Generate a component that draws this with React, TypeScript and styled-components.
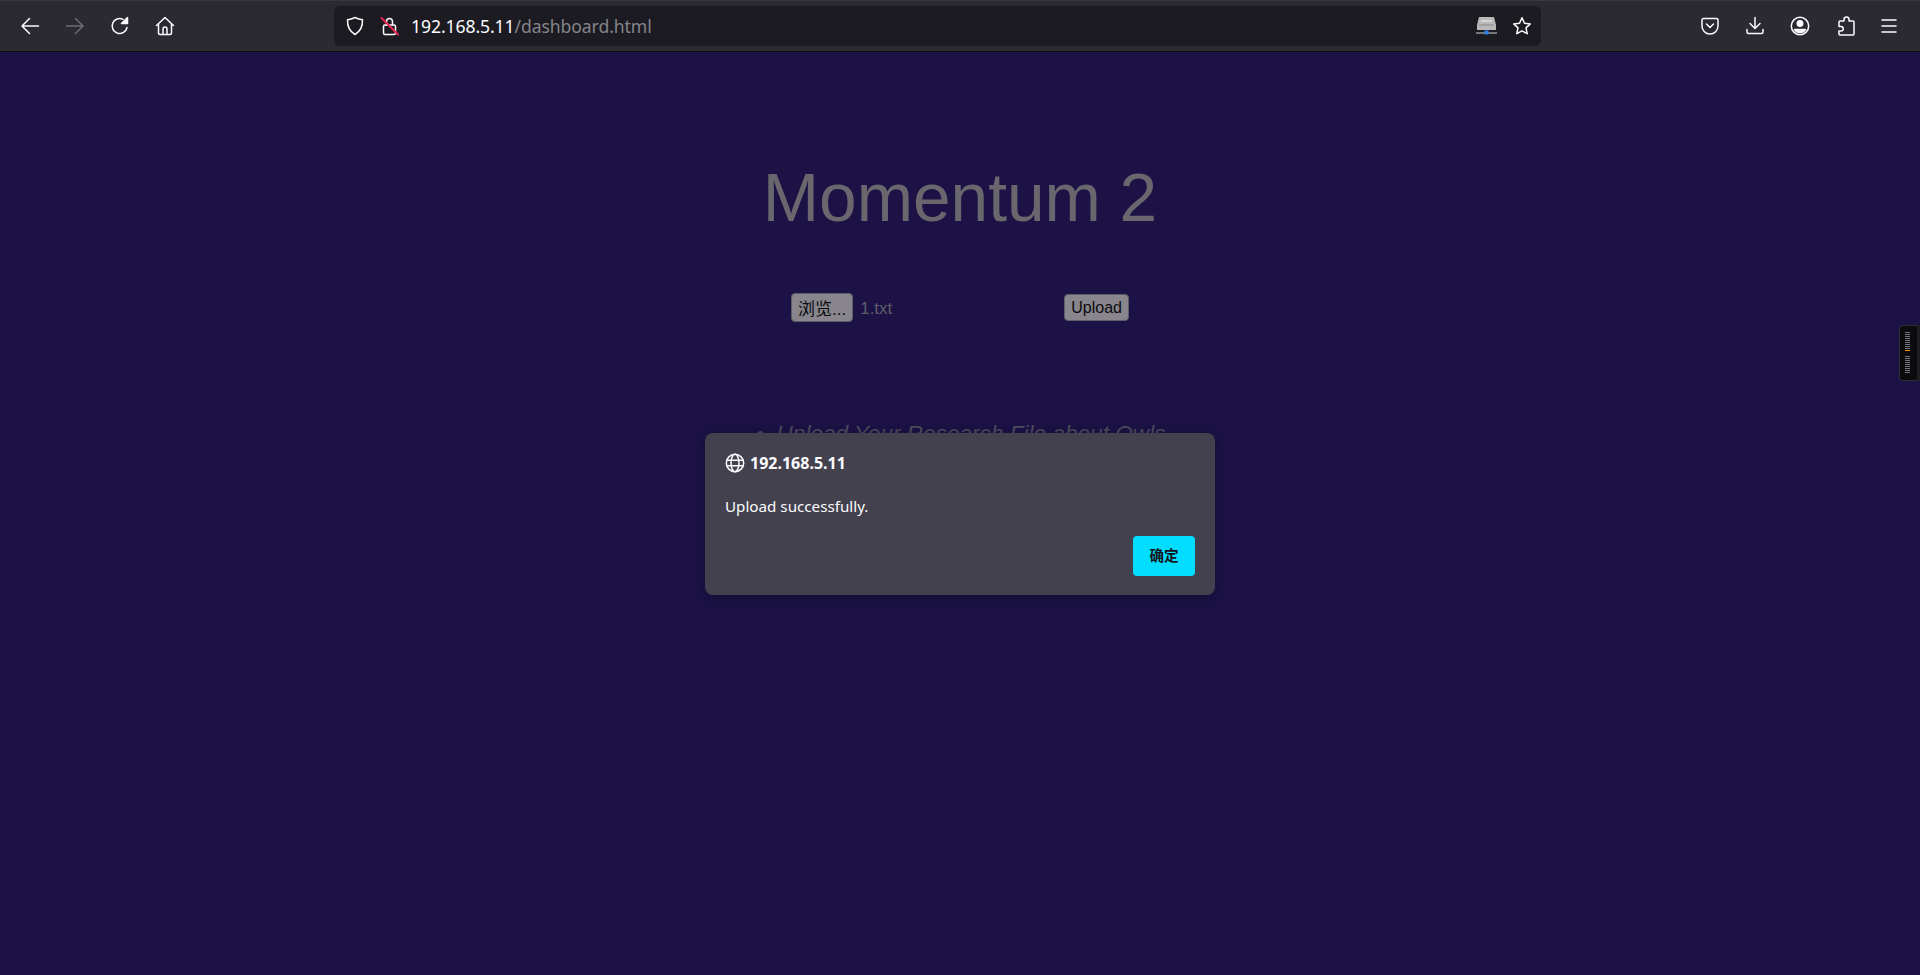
import React from 'react'
import styled, { createGlobalStyle } from 'styled-components'

const GlobalStyle = createGlobalStyle`
  html, body {
    margin: 0;
    padding: 0;
    height: 100%;
    background: #1c1246;
    overflow: hidden;
  }
`

const Window = styled.div`
  position: relative;
  display: flex;
  flex-direction: column;
  width: 1920px;
  height: 975px;
  background: #1c1246;
`

const Toolbar = styled.header`
  display: flex;
  align-items: center;
  flex: none;
  box-sizing: border-box;
  height: 52px;
  padding: 0 21px 0 20px;
  background: #2b2a33;
  border-top: 1px solid #38373f;
  border-bottom: 1px solid #0c0c0f;
`

const NavGroup = styled.nav`
  display: flex;
  align-items: center;
  gap: 25px;
  width: 314px;
`

const UrlBar = styled.div`
  display: flex;
  align-items: center;
  box-sizing: border-box;
  width: 1207px;
  height: 40px;
  padding: 0 9px 0 11px;
  background: #1c1b22;
  border-radius: 6px;
`

const UrlIcons = styled.div`
  display: flex;
  align-items: center;
  gap: 15px;
  margin-right: 11px;
`

const UrlText = styled.div`
  flex: 1;
  font: 17.6px 'Noto Sans', 'Open Sans', sans-serif;
  letter-spacing: -0.1px;
  color: #fbfbfe;
  white-space: nowrap;
`

const UrlPath = styled.span`
  color: #85848a;
`

const UrlActions = styled.div`
  display: flex;
  align-items: center;
  gap: 15px;
`

const ToolGroup = styled.div`
  display: flex;
  align-items: center;
  gap: 26.6px;
  margin-left: 160px;
`

const Icon = styled.svg<{ $dim?: boolean }>`
  display: block;
  flex: none;
  fill: none;
  stroke: ${(props) => (props.$dim ? '#6c6b72' : '#fbfbfe')};
  stroke-width: 1.5;
  stroke-linecap: round;
  stroke-linejoin: round;
`

const Page = styled.main`
  display: flex;
  flex-direction: column;
  align-items: center;
  flex: 1;
  font-family: 'Liberation Sans', Arial, sans-serif;
  color: #69676d;
`

const Title = styled.h1`
  margin: 107px 0 0;
  font-size: 67.6px;
  font-weight: 400;
  line-height: 78px;
`

const UploadForm = styled.form`
  display: flex;
  align-items: center;
  box-sizing: border-box;
  width: 338px;
  height: 29px;
  margin-top: 56px;
`

const FormButton = styled.span<{ $tall?: boolean }>`
  display: flex;
  align-items: center;
  justify-content: center;
  box-sizing: border-box;
  height: ${(props) => (props.$tall ? '29px' : '27px')};
  padding: 0 ${(props) => (props.$tall ? '6px' : '6px')};
  background: #88868c;
  border: 1px solid #5f5d68;
  border-radius: 4px;
  color: #0b0a0f;
  font: ${(props) => (props.$tall ? '17px' : '16px')} 'Liberation Sans', 'Noto Sans CJK SC', sans-serif;
`

const FileName = styled.span`
  flex: 1;
  margin-left: 7px;
  padding-top: 2px;
  font-size: 17px;
  color: #5f5d68;
`

const Notes = styled.ul`
  margin: 98px 0 0;
  padding: 0 0 0 22px;
  font-size: 22.6px;
  font-style: italic;
  line-height: 28px;
  color: #514e5f;
`

const Overlay = styled.div`
  position: absolute;
  inset: 52px 0 0 0;
  display: flex;
  justify-content: center;
  align-items: flex-start;
  padding-top: 381px;
`

const Dialog = styled.div`
  display: flex;
  flex-direction: column;
  box-sizing: border-box;
  width: 510px;
  height: 162px;
  padding: 19px 20px 19px;
  background: #44414f;
  border-radius: 8px;
  box-shadow: 0 2px 14px rgba(10, 6, 30, 0.45);
  font-family: 'Noto Sans', 'Open Sans', sans-serif;
  color: #fbfbfe;
`

const DialogHeading = styled.div`
  display: flex;
  align-items: center;
  gap: 5px;
  height: 22px;
  font-size: 16px;
  font-weight: 700;
`

const DialogMessage = styled.div`
  margin-top: 21px;
  font-size: 15.2px;
  line-height: 22px;
`

const DialogFooter = styled.div`
  display: flex;
  justify-content: flex-end;
  margin-top: auto;
`

const ConfirmButton = styled.button`
  width: 62px;
  height: 40px;
  padding: 0 0 3px;
  border: 0;
  border-radius: 4px;
  background: #00ddff;
  color: #15141a;
  font: 700 14.6px 'Noto Sans CJK SC', sans-serif;
`

const SideWidget = styled.aside`
  position: absolute;
  top: 325px;
  right: 0;
  display: flex;
  flex-direction: column;
  align-items: center;
  box-sizing: border-box;
  width: 21px;
  height: 56px;
  padding: 6px 3px 0 0;
  background: #0b0b0d;
  border: 1px solid #2e2d33;
  border-right: 3px solid #1e1e22;
  border-radius: 4px 0 0 4px;
`

const Tick = styled.i<{ $on?: boolean; $gap?: boolean }>`
  display: block;
  flex: none;
  width: 5px;
  height: 1px;
  margin-bottom: 1px;
  margin-top: ${(props) => (props.$gap ? '4px' : '0')};
  background: ${(props) => (props.$on ? '#e8900c' : '#77767b')};
`

const BackIcon = () => (
  <Icon width="20" height="20" viewBox="0 0 20 20">
    <path d="M18.500 10H2M9.500 2.500 2 10l7.500 7.500" />
  </Icon>
)

const ForwardIcon = () => (
  <Icon $dim width="20" height="20" viewBox="0 0 20 20">
    <path d="M1.500 10H18M10.500 2.500 18 10l-7.500 7.500" />
  </Icon>
)

const ReloadIcon = () => (
  <Icon width="20" height="20" viewBox="0 0 20 20">
    <path d="M17 11.500A7.500 7.500 0 1 1 13 3.300" />
    <path d="M17.500 1.500v6h-6z" fill="#fbfbfe" />
  </Icon>
)

const HomeIcon = () => (
  <Icon width="20" height="20" viewBox="0 0 20 20">
    <path d="M1.500 9.500 10 1.500l8.500 8M3.500 8v9a1.500 1.500 0 0 0 1.500 1.500h10a1.500 1.500 0 0 0 1.500-1.500V8" />
    <path d="M8 18.500V13a2 2 0 0 1 4 0v5.500" />
  </Icon>
)

const ShieldIcon = () => (
  <Icon width="20" height="20" viewBox="0 0 20 20">
    <path d="M10 1.500c2.500 1.300 5 2 7.500 2.200.3 6.800-2 11.500-7.500 14.800C4.500 15.200 2.200 10.500 2.500 3.700 5 3.500 7.500 2.800 10 1.500z" />
  </Icon>
)

const BrokenLockIcon = () => (
  <Icon width="20" height="20" viewBox="0 0 20 20">
    <rect x="3.500" y="9" width="12" height="9.500" rx="1.500" />
    <path d="M6.500 9V5.500a3 3 0 0 1 6 0V9" />
    <path d="M1.500 2 18 18.500" stroke="#e22850" strokeWidth="2" />
  </Icon>
)

const StorageIcon = () => (
  <svg width="21" height="20" viewBox="0 0 21 20">
    <path d="M3 1h15l2 8v5H1V9z" fill="#b9b9b9" />
    <path d="M3 9h15" stroke="#8a8a8a" />
    <path d="M5 4h11v2H5z" fill="#d4d4d4" />
    <rect x="0" y="16" width="21" height="2" fill="#77767b" />
    <rect x="8.500" y="14.500" width="4" height="4" fill="#2f7fe8" />
  </svg>
)

const StarIcon = () => (
  <Icon width="20" height="20" viewBox="0 0 20 20">
    <path d="M10 1.800l2.500 5.400 5.800.7-4.300 4 1.200 5.800L10 14.800l-5.200 2.900L6 11.900l-4.300-4 5.800-.7z" />
  </Icon>
)

const PocketIcon = () => (
  <Icon width="18" height="20" viewBox="0 0 18 20">
    <path d="M2.500 2.500h13A1.500 1.500 0 0 1 17 4v6a8 8 0 0 1-16 0V4a1.500 1.500 0 0 1 1.500-1.500z" />
    <path d="M5.500 8 9 11.500 12.500 8" />
  </Icon>
)

const DownloadIcon = () => (
  <Icon width="18" height="20" viewBox="0 0 18 20">
    <path d="M9 1.500V12.500M4 7.500l5 5 5-5M1 13.500v2.500a1.500 1.500 0 0 0 1.500 1.500h13A1.500 1.500 0 0 0 17 16v-2.500" />
  </Icon>
)

const AccountIcon = () => (
  <Icon width="20" height="20" viewBox="0 0 20 20">
    <circle cx="10" cy="10" r="8.700" />
    <circle cx="10" cy="7.500" r="2.700" fill="#fbfbfe" />
    <path d="M4.500 13.500h11c-1 2-3 3-5.500 3s-4.500-1-5.500-3z" fill="#fbfbfe" />
  </Icon>
)

const PuzzleIcon = () => (
  <Icon width="18" height="20" viewBox="0 0 18 20">
    <path d="M7 5V3.500a2.500 2.500 0 0 1 5 0V5h4a1 1 0 0 1 1 1v12a1 1 0 0 1-1 1H3a1 1 0 0 1-1-1v-3h2a2.200 2.200 0 0 0 0-4.500H2V6a1 1 0 0 1 1-1z" />
  </Icon>
)

const MenuIcon = () => (
  <Icon width="16" height="20" viewBox="0 0 16 20">
    <path d="M1 4h14M1 10h14M1 16h14" />
  </Icon>
)

const GlobeIcon = () => (
  <Icon width="20" height="20" viewBox="0 0 20 20">
    <circle cx="10" cy="10" r="8.700" />
    <ellipse cx="10" cy="10" rx="4" ry="8.700" />
    <path d="M1.800 7.200h16.400M1.800 12.800h16.400" />
  </Icon>
)

const sliderTicks = Array.from({ length: 19 }, (_, i) => i)

const App: React.FC = () => {
  return (
    <Window>
      <GlobalStyle />
      <Toolbar>
        <NavGroup>
          <BackIcon />
          <ForwardIcon />
          <ReloadIcon />
          <HomeIcon />
        </NavGroup>
        <UrlBar>
          <UrlIcons>
            <ShieldIcon />
            <BrokenLockIcon />
          </UrlIcons>
          <UrlText>
            192.168.5.11<UrlPath>/dashboard.html</UrlPath>
          </UrlText>
          <UrlActions>
            <StorageIcon />
            <StarIcon />
          </UrlActions>
        </UrlBar>
        <ToolGroup>
          <PocketIcon />
          <DownloadIcon />
          <AccountIcon />
          <PuzzleIcon />
          <MenuIcon />
        </ToolGroup>
      </Toolbar>
      <Page>
        <Title>Momentum 2</Title>
        <UploadForm>
          <FormButton $tall>浏览...</FormButton>
          <FileName>1.txt</FileName>
          <FormButton>Upload</FormButton>
        </UploadForm>
        <Notes>
          <li>Upload Your Research File about Owls</li>
        </Notes>
      </Page>
      <Overlay>
        <Dialog>
          <DialogHeading>
            <GlobeIcon />
            192.168.5.11
          </DialogHeading>
          <DialogMessage>Upload successfully.</DialogMessage>
          <DialogFooter>
            <ConfirmButton>确定</ConfirmButton>
          </DialogFooter>
        </Dialog>
      </Overlay>
      <SideWidget>
        {sliderTicks.map((n) => (
          <Tick key={n} $on={n === 9} $gap={n === 10} />
        ))}
      </SideWidget>
    </Window>
  )
}

export default App
